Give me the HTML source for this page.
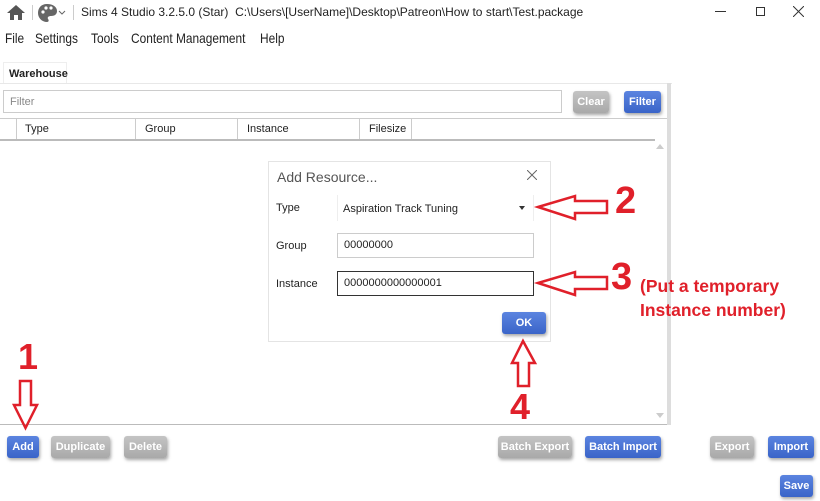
<!DOCTYPE html>
<html><head><meta charset="utf-8"><style>
*{box-sizing:border-box;margin:0;padding:0}
body{width:820px;height:501px;background:#fff;font-family:"Liberation Sans",sans-serif;position:relative;overflow:hidden;color:#222}
.a{position:absolute}
.btn{position:absolute;height:22px;border-radius:3px;color:#fff;font-size:11px;font-weight:bold;text-align:center;line-height:22px;box-shadow:1px 2px 3px rgba(0,0,0,.35);font-family:"Liberation Sans Narrow","Liberation Sans",sans-serif}
.b{background:linear-gradient(#5b84e0,#3a64c8);}
.g{background:linear-gradient(#c4c4c4,#a9a9a9);}
.hdr{position:absolute;top:119px;height:20px;font-size:11px;line-height:20px;border-right:1px solid #ccc}
.inp{position:absolute;border:1px solid #ccc;font-size:11px;padding-left:6px;line-height:23px;background:#fff}
.red{color:#e0202a;font-weight:bold;position:absolute}
.m{position:absolute;top:30px;font-size:14px;transform:scaleX(0.85);transform-origin:0 0;white-space:nowrap}
</style></head><body>
<svg class="a" style="left:6px;top:4px" width="20" height="17" viewBox="0 0 20 17"><path d="M10 1 L1 9 H4 V16 H8 V11 H12 V16 H16 V9 H19 Z" fill="#555"/></svg>
<div class="a" style="left:32px;top:5px;width:1px;height:15px;background:#ccc"></div>
<svg class="a" style="left:37px;top:3px" width="30" height="20" viewBox="0 0 30 20"><path d="M10 1 C4 1 1 5 1 10 C1 15 5 19 10 19 C12 19 12 17 11 16 C10 14 12 13 14 13 C18 13 20 11 20 8 C20 4 16 1 10 1Z" fill="#666"/><circle cx="6" cy="9" r="1.6" fill="#fff"/><circle cx="9" cy="5" r="1.6" fill="#fff"/><circle cx="14" cy="5" r="1.6" fill="#fff"/><path d="M22 8 l3 3 l3 -3" stroke="#666" fill="none"/></svg>
<div class="a" style="left:73px;top:5px;width:1px;height:15px;background:#ccc"></div>
<div class="a" style="left:81px;top:5px;font-size:12px">Sims 4 Studio 3.2.5.0 (Star)&nbsp; C:\Users\[UserName]\Desktop\Patreon\How to start\Test.package</div>
<div class="a" style="left:715px;top:11px;width:11px;height:1px;background:#333"></div>
<div class="a" style="left:756px;top:7px;width:9px;height:9px;border:1px solid #333"></div>
<svg class="a" style="left:793px;top:6px" width="11" height="11"><path d="M0 0L11 11M11 0L0 11" stroke="#333"/></svg>
<div class="m" style="left:5px">File</div>
<div class="m" style="left:35px">Settings</div>
<div class="m" style="left:91px">Tools</div>
<div class="m" style="left:131px">Content Management</div>
<div class="m" style="left:260px">Help</div>
<div class="a" style="left:3px;top:62px;width:64px;height:22px;border:1px solid #eee;border-bottom:none;font-size:11px;font-weight:bold;padding:5px 0 0 5px">Warehouse</div>
<div class="a" style="left:0;top:83px;width:672px;height:1px;background:#e8e8e8"></div>
<div class="a" style="left:667px;top:83px;width:4px;height:342px;background:#ddd"></div>
<div class="inp" style="left:3px;top:90px;width:559px;height:23px;color:#888">Filter</div>
<div class="btn g" style="left:573px;top:91px;width:36px">Clear</div>
<div class="btn b" style="left:624px;top:91px;width:37px">Filter</div>
<div class="a" style="left:0;top:118px;width:667px;height:307px;border-top:1px solid #ccc;border-bottom:1px solid #bbb"></div>
<div class="a" style="left:0;top:139px;width:655px;height:2px;background:#bbb"></div>
<div class="hdr" style="left:0;width:17px"></div>
<div class="hdr" style="left:17px;width:119px;padding-left:8px">Type</div>
<div class="hdr" style="left:136px;width:102px;padding-left:9px">Group</div>
<div class="hdr" style="left:238px;width:122px;padding-left:9px">Instance</div>
<div class="hdr" style="left:360px;width:52px;padding-left:9px">Filesize</div>
<div class="a" style="left:656px;top:144px;border:4px solid transparent;border-bottom:5px solid #ccc;border-top:none"></div>
<div class="a" style="left:656px;top:413px;border:4px solid transparent;border-top:5px solid #ccc;border-bottom:none"></div>

<div class="a" style="left:268px;top:161px;width:283px;height:181px;border:1px solid #e4e4e4;background:#fff">
<div class="a" style="left:8px;top:7px;font-size:14px;color:#555">Add Resource...</div>
<svg class="a" style="left:258px;top:8px" width="10" height="10"><path d="M0 0L10 10M10 0L0 10" stroke="#666"/></svg>
<div class="a" style="left:7px;top:40px;font-size:11px">Type</div>
<div class="a" style="left:68px;top:33px;width:197px;height:26px;border-left:1px solid #eee;border-right:1px solid #eee;font-size:11px;padding:8px 0 0 5px">Aspiration Track Tuning</div>
<div class="a" style="left:250px;top:44px;border:3px solid transparent;border-top:4px solid #333;border-bottom:none"></div>
<div class="a" style="left:7px;top:78px;font-size:11px">Group</div>
<div class="inp" style="left:68px;top:71px;width:197px;height:25px">00000000</div>
<div class="a" style="left:7px;top:116px;font-size:11px">Instance</div>
<div class="inp" style="left:68px;top:109px;width:197px;height:25px;border-color:#333">0000000000000001</div>
<div class="btn b" style="left:233px;top:150px;width:44px">OK</div>
</div>

<svg class="a" style="left:0;top:0" width="820" height="501">
<g fill="none" stroke="#e0202a" stroke-width="2.5" stroke-linejoin="miter">
<path d="M538 207 L575 196 V201 H607 V213 H575 V219 Z"/>
<path d="M538 283 L575 272 V277 H607 V289 H575 V295 Z"/>
<path d="M20 381 H31 V405 H37 L25.5 428 L14 405 H20 Z"/>
<path d="M523 341 L535 363 H529 V386 H518 V363 H512 Z"/>
</g></svg>
<div class="red" style="left:615px;top:180px;font-size:38px">2</div>
<div class="red" style="left:611px;top:256px;font-size:38px">3</div>
<div class="red" style="left:640px;top:274px;font-size:17.5px;line-height:24px">(Put a temporary<br>Instance number)</div>
<div class="red" style="left:18px;top:336px;font-size:36px">1</div>
<div class="red" style="left:510px;top:386px;font-size:36px">4</div>

<div class="btn b" style="left:7px;top:436px;width:32px">Add</div>
<div class="btn g" style="left:51px;top:436px;width:59px">Duplicate</div>
<div class="btn g" style="left:124px;top:436px;width:43px">Delete</div>
<div class="btn g" style="left:498px;top:436px;width:74px">Batch Export</div>
<div class="btn b" style="left:585px;top:436px;width:76px">Batch Import</div>
<div class="btn g" style="left:710px;top:436px;width:44px">Export</div>
<div class="btn b" style="left:768px;top:436px;width:46px">Import</div>
<div class="btn b" style="left:780px;top:475px;width:33px">Save</div>
</body></html>
